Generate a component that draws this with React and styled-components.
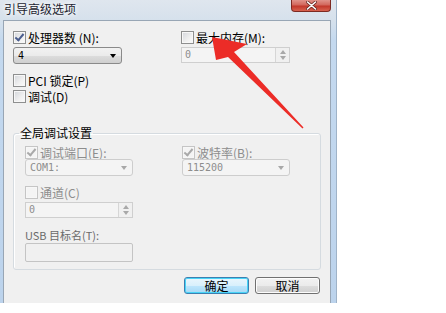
import React from 'react';
import styled, { createGlobalStyle } from 'styled-components';

const GlobalStyle = createGlobalStyle`
    html, body {
        margin: 0;
        padding: 0;
        background: #ffffff;
    }
    body {
        font-family: "Noto Sans CJK SC", "Liberation Sans", sans-serif;
        font-size: 12px;
        color: #000;
    }
`;

export default function App() {
    return (
        <>
            <GlobalStyle />
            <Page>
                <Window>
                    <TitleBar>
                        <Title>引导高级选项</Title>
                        <CloseButton>
                            <svg width="11" height="9" viewBox="0 0 11 9">
                                <path d="M1.5 1 L9.5 8 M9.5 1 L1.5 8" stroke="#6b2a24" strokeWidth="3" strokeLinecap="round" />
                                <path d="M1.5 1 L9.5 8 M9.5 1 L1.5 8" stroke="#ffffff" strokeWidth="1.6" strokeLinecap="round" />
                            </svg>
                        </CloseButton>
                    </TitleBar>
                    <Client>
                        <TopGrid>
                            <Column>
                                <CheckRow>
                                    <Checkbox $checked />
                                    <Label>处理器数 (N):</Label>
                                </CheckRow>
                                <Select $gap={3}>
                                    <span>4</span>
                                    <Arrow />
                                </Select>
                                <CheckRow $gap={10}>
                                    <Checkbox />
                                    <Label>PCI 锁定(P)</Label>
                                </CheckRow>
                                <CheckRow $gap={3}>
                                    <Checkbox />
                                    <Label>调试(D)</Label>
                                </CheckRow>
                            </Column>
                            <Column>
                                <CheckRow>
                                    <Checkbox />
                                    <Label>最大内存(M):</Label>
                                </CheckRow>
                                <Spin $gap={3}>
                                    <span>0</span>
                                    <SpinButtons>
                                        <Arrow $up $disabled />
                                        <Arrow $disabled />
                                    </SpinButtons>
                                </Spin>
                            </Column>
                        </TopGrid>

                        <Group>
                            <Legend>全局调试设置</Legend>
                            <GroupGrid>
                                <Column>
                                    <CheckRow>
                                        <Checkbox $checked $disabled />
                                        <Label $disabled>调试端口(E):</Label>
                                    </CheckRow>
                                    <Select $disabled>
                                        <span>COM1:</span>
                                        <Arrow $disabled />
                                    </Select>
                                    <CheckRow $gap={10}>
                                        <Checkbox $disabled />
                                        <Label $disabled>通道(C)</Label>
                                    </CheckRow>
                                    <Spin $gap={3}>
                                        <span>0</span>
                                        <SpinButtons>
                                            <Arrow $up $disabled />
                                            <Arrow $disabled />
                                        </SpinButtons>
                                    </Spin>
                                    <Caption>USB 目标名(T):</Caption>
                                    <TextBox />
                                </Column>
                                <Column>
                                    <CheckRow>
                                        <Checkbox $checked $disabled />
                                        <Label $disabled>波特率(B):</Label>
                                    </CheckRow>
                                    <Select $disabled>
                                        <span>115200</span>
                                        <Arrow $disabled />
                                    </Select>
                                </Column>
                            </GroupGrid>
                        </Group>

                        <ButtonRow>
                            <Button $primary>确定</Button>
                            <Button>取消</Button>
                        </ButtonRow>
                    </Client>
                </Window>

                <Annotation width="446" height="313" viewBox="0 0 446 313">
                    <polygon
                        points="212,37 247,44 234,52 303.5,127.5 302.5,128.5 228,57 216,60"
                        fill="#ec2c27"
                    />
                </Annotation>
            </Page>
        </>
    );
}

const Page = styled.div`
    position: relative;
    width: 446px;
    height: 313px;
    overflow: hidden;
`;

const Window = styled.div`
    width: 338px;
    height: 303px;
    box-sizing: border-box;
    padding: 0 5px 0 3px;
    display: flex;
    flex-direction: column;
    background: linear-gradient(180deg, #dfe6ee 0px, #d6e1ec 20px, #c4d9ef 40px, #bcd3ec 100%);
    border-left: 1px solid #9fb3c8;
    border-right: 1px solid #9fb3c8;
    margin-left: -1px;
`;

const TitleBar = styled.div`
    height: 20px;
    flex: none;
    display: flex;
    justify-content: space-between;
    align-items: flex-start;
`;

const Title = styled.div`
    padding: 2px 0 0 1px;
    font-size: 12px;
    line-height: 14px;
    color: #1c2430;
    text-shadow: 0 0 6px #ffffff, 0 0 4px #ffffff;
`;

const CloseButton = styled.div`
    width: 40px;
    height: 12px;
    box-sizing: border-box;
    display: flex;
    align-items: center;
    justify-content: center;
    border: 1px solid #7d2a22;
    border-top: none;
    border-radius: 0 0 4px 4px;
    background: linear-gradient(180deg, #e0938a 0%, #d2675c 45%, #c2382b 55%, #d7624f 100%);
`;

const Client = styled.div`
    flex: 1;
    box-sizing: border-box;
    border: 1px solid #98a6b5;
    border-bottom: none;
    background: #f0f0f0;
    display: flex;
    flex-direction: column;
`;

const TopGrid = styled.div`
    display: grid;
    grid-template-columns: 109px 109px;
    column-gap: 59px;
    padding: 10px 0 0 9px;
`;

const Column = styled.div`
    display: flex;
    flex-direction: column;
`;

const CheckRow = styled.div`
    display: flex;
    align-items: center;
    gap: 2px;
    height: 13px;
    margin-top: ${p => p.$gap || 0}px;
`;

const Checkbox = styled.span`
    position: relative;
    width: 13px;
    height: 13px;
    flex: none;
    box-sizing: border-box;
    border: 1px solid ${p => (p.$disabled ? '#c5c5c5' : '#8e8f8f')};
    background: ${p => (p.$disabled
        ? '#f4f4f4'
        : 'linear-gradient(135deg, #d3d6db 0%, #f0f0f0 60%, #fbfbfb 100%)')};
    box-shadow: inset 0 0 0 1px #f7f7f7;

    &::after {
        content: '';
        display: ${p => (p.$checked ? 'block' : 'none')};
        position: absolute;
        left: 3px;
        top: 0px;
        width: 3px;
        height: 7px;
        border: solid ${p => (p.$disabled ? '#a9a9a9' : '#4a5d8e')};
        border-width: 0 2px 2px 0;
        transform: rotate(40deg);
    }
`;

const Label = styled.span`
    font-size: 12px;
    line-height: 13px;
    white-space: nowrap;
    color: ${p => (p.$disabled ? '#8d8d8d' : '#000')};
`;

const Select = styled.div`
    height: 17px;
    margin-top: ${p => p.$gap || 0}px;
    box-sizing: border-box;
    display: flex;
    align-items: center;
    justify-content: space-between;
    padding: 0 5px 0 4px;
    border: 1px solid ${p => (p.$disabled ? '#cdcdcd' : '#8a8a8a')};
    border-radius: 3px;
    background: ${p => (p.$disabled
        ? '#f4f4f4'
        : 'linear-gradient(180deg, #f2f2f2 0%, #ebebeb 50%, #dddddd 51%, #cfcfcf 100%)')};
    font-family: "DejaVu Sans Mono", "Liberation Mono", monospace;
    font-size: 10px;
    color: ${p => (p.$disabled ? '#8d8d8d' : '#000')};
`;

const Arrow = styled.span`
    width: 0;
    height: 0;
    border-left: 3.5px solid transparent;
    border-right: 3.5px solid transparent;
    ${p => (p.$up ? 'border-bottom' : 'border-top')}: 4px solid ${p => (p.$disabled ? '#a8a8a8' : '#000')};
`;

const Spin = styled.div`
    height: 16px;
    margin-top: ${p => p.$gap || 0}px;
    box-sizing: border-box;
    display: flex;
    align-items: stretch;
    justify-content: space-between;
    border: 1px solid #cfcfcf;
    background: #f4f4f4;
    font-family: "DejaVu Sans Mono", "Liberation Mono", monospace;
    font-size: 10px;
    color: #8d8d8d;

    & > span {
        padding-left: 3px;
        line-height: 14px;
    }
`;

const SpinButtons = styled.div`
    width: 14px;
    box-sizing: border-box;
    border-left: 1px solid #d6d6d6;
    display: flex;
    flex-direction: column;
    align-items: center;
    justify-content: space-around;
    padding: 1px 0;
    background: #f0f0f0;
`;

const Group = styled.fieldset`
    margin: 24px 9px 0 9px;
    padding: 0 11px 7px 11px;
    border: 1px solid #d5dbe0;
    border-radius: 3px;
    box-shadow: inset 1px 1px 0 #ffffff;
    min-width: 0;
`;

const Legend = styled.legend`
    padding: 0 1px;
    margin-left: -6px;
    font-size: 12px;
    line-height: 12px;
    color: #000;
`;

const GroupGrid = styled.div`
    display: grid;
    grid-template-columns: 108px 108px;
    column-gap: 49px;
    padding-top: 7px;
`;

const Caption = styled.div`
    margin-top: 11px;
    font-size: 11px;
    line-height: 12px;
    color: #6a6a6a;
`;

const TextBox = styled.div`
    height: 19px;
    margin-top: 2px;
    box-sizing: border-box;
    border: 1px solid #c4c4c4;
    border-radius: 2px;
    background: #f0f0f0;
`;

const ButtonRow = styled.div`
    display: flex;
    justify-content: flex-end;
    gap: 6px;
    padding: 7px 10px 0 0;
`;

const Button = styled.div`
    width: 65px;
    height: 17px;
    box-sizing: border-box;
    display: flex;
    align-items: center;
    justify-content: center;
    border: 1px solid ${p => (p.$primary ? '#3c7fb1' : '#707070')};
    border-radius: 3px;
    background: ${p => (p.$primary
        ? 'linear-gradient(180deg, #eaf6fd 0%, #d9f0fc 50%, #bee6fd 51%, #a7d9f5 100%)'
        : 'linear-gradient(180deg, #f2f2f2 0%, #ebebeb 50%, #dddddd 51%, #cfcfcf 100%)')};
    box-shadow: inset 0 0 0 1px ${p => (p.$primary ? '#48d4f7' : '#fcfcfc')};
    font-size: 12px;
    line-height: 14px;
    color: #000;
`;

const Annotation = styled.svg`
    position: absolute;
    left: 0;
    top: 0;
    pointer-events: none;
`;
